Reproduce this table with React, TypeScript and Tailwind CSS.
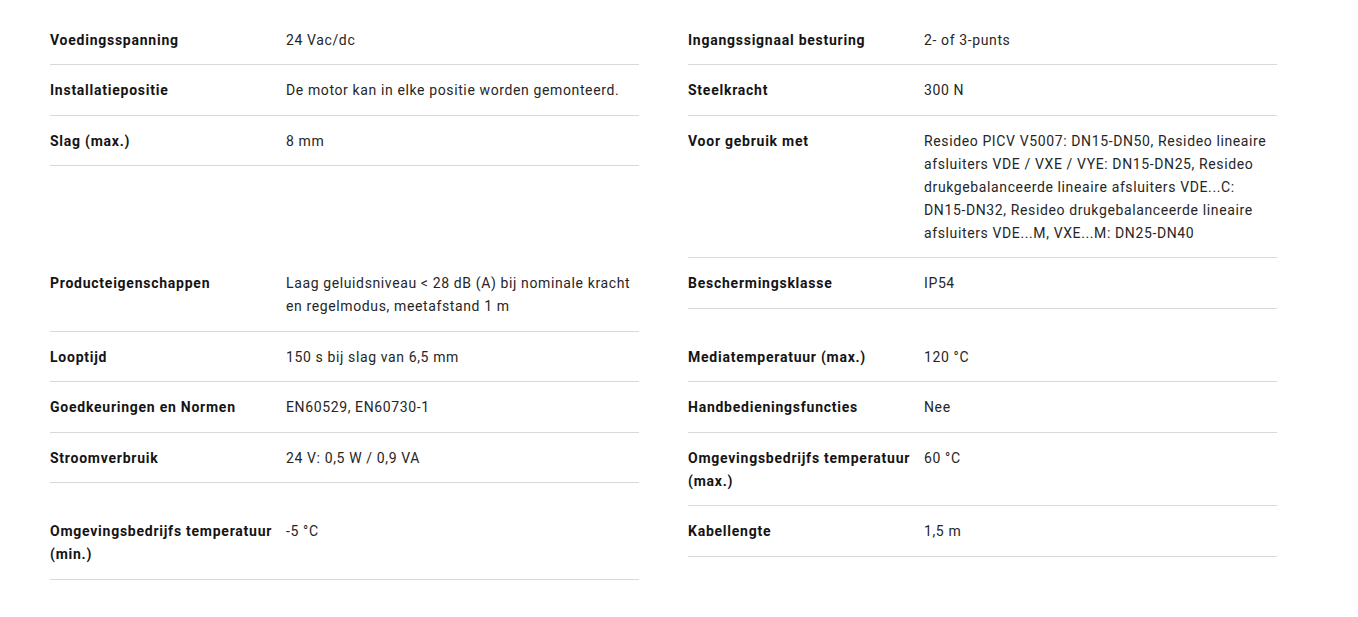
import React from "react";

const rows: [string, string][] = [
  ["Voedingsspanning", "24 Vac/dc"],
  ["Ingangssignaal besturing", "2- of 3-punts"],
  ["Installatiepositie", "De motor kan in elke positie worden gemonteerd."],
  ["Steelkracht", "300 N"],
  ["Slag (max.)", "8 mm"],
  [
    "Voor gebruik met",
    "Resideo PICV V5007: DN15-DN50, Resideo lineaire afsluiters VDE / VXE / VYE: DN15-DN25, Resideo drukgebalanceerde lineaire afsluiters VDE...C: DN15-DN32, Resideo drukgebalanceerde lineaire afsluiters VDE...M, VXE...M: DN25-DN40",
  ],
  ["Producteigenschappen", "Laag geluidsniveau < 28 dB (A) bij nominale kracht en regelmodus, meetafstand 1 m"],
  ["Beschermingsklasse", "IP54"],
  ["Looptijd", "150 s bij slag van 6,5 mm"],
  ["Mediatemperatuur (max.)", "120 °C"],
  ["Goedkeuringen en Normen", "EN60529, EN60730-1"],
  ["Handbedieningsfuncties", "Nee"],
  ["Stroomverbruik", "24 V: 0,5 W / 0,9 VA"],
  ["Omgevingsbedrijfs temperatuur (max.)", "60 °C"],
  ["Omgevingsbedrijfs temperatuur (min.)", "-5 °C"],
  ["Kabellengte", "1,5 m"],
];

export default function App() {
  return (
    <div
      className="w-[1358px] h-[617px] bg-white pl-[50px] pt-[14.5px]"
      style={{ fontFamily: "Roboto, 'Noto Sans', sans-serif" }}
    >
      <div className="grid grid-cols-[589px_589px] gap-x-[49px] items-start">
        {rows.map(([label, value], i) => (
          <div
            key={i}
            className="grid grid-cols-[236px_1fr] pt-[14px] pb-[12.5px] border-b border-[#d9d9d9] text-[14px] leading-[23px]"
          >
            <div className="font-bold text-[#141414] pr-3 tracking-[0.75px]">{label}</div>
            <div className="text-[#262626] tracking-[0.62px]">{value}</div>
          </div>
        ))}
      </div>
    </div>
  );
}
